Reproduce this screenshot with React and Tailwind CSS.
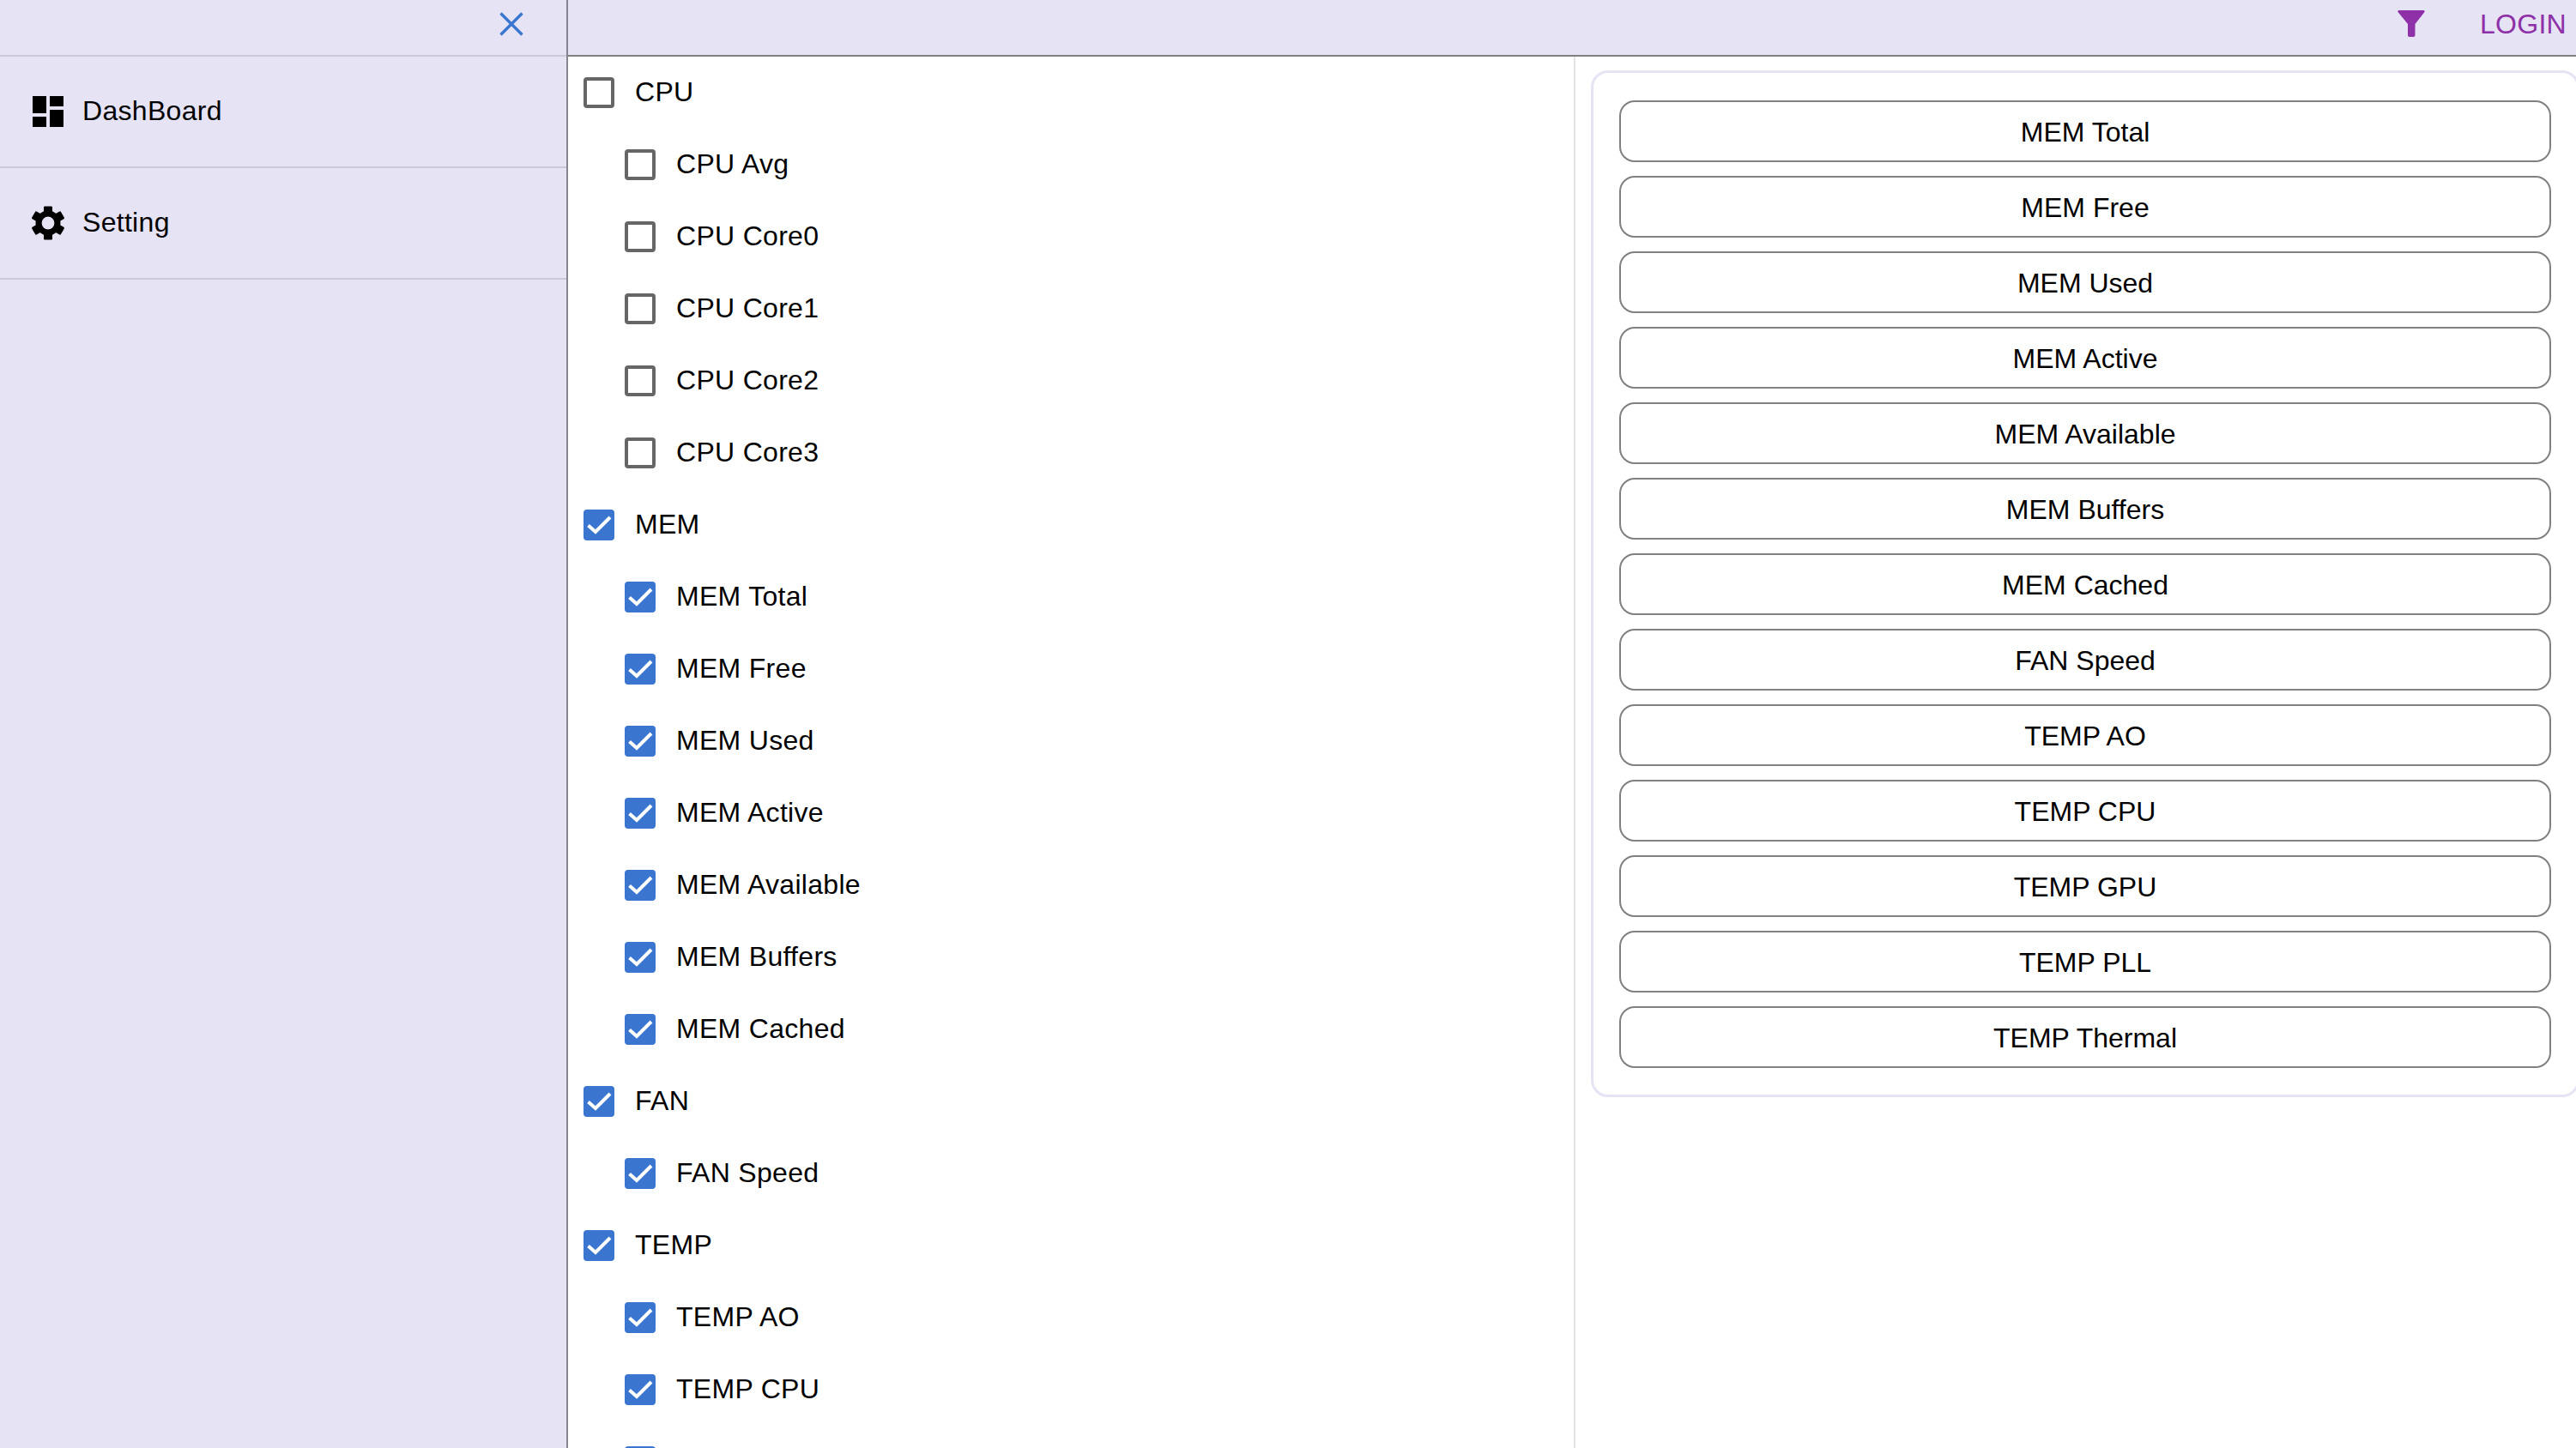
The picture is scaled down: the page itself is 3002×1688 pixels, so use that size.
const font = { fontFamily: '"Liberation Sans", Arial, sans-serif' };

function Check({ on }) {
  return on ? (
    <span className="w-9 h-9 rounded-[4px] bg-[#3a75cf] block shrink-0">
      <svg width="36" height="36" viewBox="0 0 36 36" fill="none">
        <path d="M5.5 18.5 L14 26 L31 9" stroke="#fff" strokeWidth="4" />
      </svg>
    </span>
  ) : (
    <span className="w-9 h-9 rounded-[4px] border-4 border-[#666666] bg-white shrink-0" />
  );
}

const rows = [
  ["CPU", 0, false], ["CPU Avg", 1, false], ["CPU Core0", 1, false], ["CPU Core1", 1, false], ["CPU Core2", 1, false], ["CPU Core3", 1, false],
  ["MEM", 0, true], ["MEM Total", 1, true], ["MEM Free", 1, true], ["MEM Used", 1, true], ["MEM Active", 1, true], ["MEM Available", 1, true], ["MEM Buffers", 1, true], ["MEM Cached", 1, true],
  ["FAN", 0, true], ["FAN Speed", 1, true],
  ["TEMP", 0, true], ["TEMP AO", 1, true], ["TEMP CPU", 1, true], ["TEMP GPU", 1, true],
];

const selected = ["MEM Total", "MEM Free", "MEM Used", "MEM Active", "MEM Available", "MEM Buffers", "MEM Cached", "FAN Speed", "TEMP AO", "TEMP CPU", "TEMP GPU", "TEMP PLL", "TEMP Thermal"];

function Gear() {
  return (
    <svg width="48" height="48" viewBox="0 0 48 48" fill="#000">
      <circle cx="24" cy="24" r="14.5" />
      {[0, 60, 120, 180, 240, 300].map((a) => (
        <rect key={a} x="19" y="4.5" width="10" height="10" rx="1.2" transform={`rotate(${a} 24 24)`} />
      ))}
      <circle cx="24" cy="24" r="7.4" fill="#e6e3f5" />
    </svg>
  );
}

export default function App() {
  return (
    <div style={font} className="w-[3002px] h-[1688px] overflow-hidden flex bg-white text-[32px] tracking-[0.3px] text-black">
      <aside className="w-[662px] shrink-0 h-full bg-[#e6e3f5] border-r-2 border-[#85858f] flex flex-col">
        <div className="h-[66px] border-b-2 border-[#cbc8da] flex items-center justify-end pr-[50px] pb-2 shrink-0">
          <svg width="28" height="28" viewBox="0 0 28 28" fill="none">
            <path d="M1.5 1.5 L26.5 26.5 M26.5 1.5 L1.5 26.5" stroke="#3a75cf" strokeWidth="3.4" />
          </svg>
        </div>
        <div className="h-[130px] border-b-2 border-[#cbc8da] flex items-center pl-8 gap-4 shrink-0">
          <svg width="48" height="48" viewBox="0 0 24 24" fill="#000">
            <path d="M3 13h8V3H3v10zm0 8h8v-6H3v6zm10 0h8V11h-8v10zm0-18v6h8V3h-8z" />
          </svg>
          <span className="mb-[2px]">DashBoard</span>
        </div>
        <div className="h-[130px] border-b-2 border-[#cbc8da] flex items-center pl-8 gap-4 shrink-0">
          <Gear />
          <span className="mb-[2px]">Setting</span>
        </div>
      </aside>
      <div className="flex-1 min-w-0 flex flex-col h-full">
        <header className="h-[66px] shrink-0 bg-[#e6e3f5] border-b-2 border-[#808080] flex items-center justify-end pr-[11px] pb-2 gap-[64px] text-[#8e30a8]">
          <svg width="32" height="32" viewBox="0 0 32 32" fill="#8e30a8">
            <path d="M1.5 0 H30.5 Q32 0 31.5 2 L20.5 16 V29 Q20.5 31 18.5 31 H14 Q12 31 12 29 V16 L0.5 2 Q0 0 1.5 0 Z" />
          </svg>
          <span>LOGIN</span>
        </header>
        <div className="flex flex-1 min-h-0">
          <div className="w-[1172px] shrink-0 pl-[18px] pt-6 flex flex-col">
            {rows.map(([label, child, on]) => (
              <div key={label} className={`h-[84px] shrink-0 flex items-start gap-6 ${child ? "pl-[48px]" : ""}`}>
                <Check on={on} />
                <span className="leading-[34px]">{label}</span>
              </div>
            ))}
          </div>
          <div className="flex-1 border-l-2 border-[#e3e3e8] pl-[18px] pt-4 min-w-0">
            <div className="w-[1152px] rounded-[20px] border-[3px] border-[#e6e3f5] pl-[30px] pr-[30px] pt-8 pb-[31px] flex flex-col gap-4 tracking-normal">
              {selected.map((s) => (
                <div key={s} className="h-[72px] rounded-[18px] border-2 border-[#808080] flex items-center justify-center pt-px">
                  {s}
                </div>
              ))}
            </div>
          </div>
        </div>
      </div>
    </div>
  );
}
